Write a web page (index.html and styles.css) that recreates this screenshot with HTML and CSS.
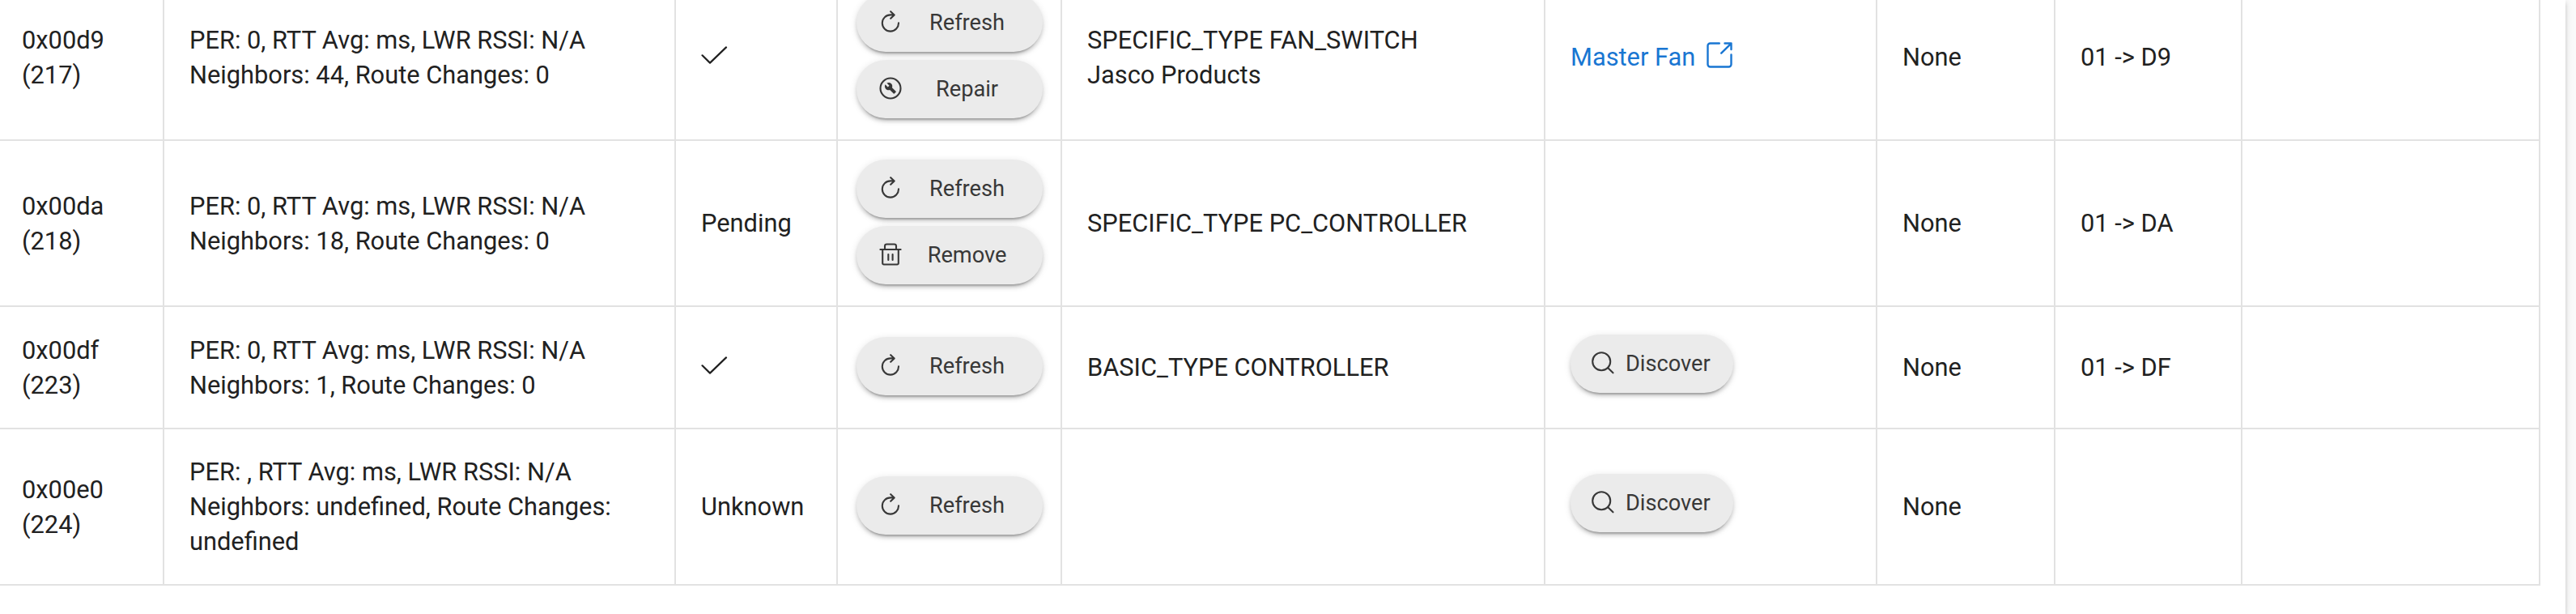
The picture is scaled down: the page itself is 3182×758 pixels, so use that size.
FILE: index.html
```html
<!DOCTYPE html>
<html>

<head>
	<meta charset="UTF-8">
	<title>Z-Wave Details</title>
	<link rel="stylesheet" href="styles.css">
</head>

<body>
	<!-- icons -->
	<svg class="defs" width="0" height="0">
		<symbol id="check" viewBox="0 0 36 36">
			<path d="M1.500 18.300l9.500 9.300L31 8.400" fill="none" stroke="currentColor" stroke-width="2.200" stroke-linecap="round" stroke-linejoin="round" />
		</symbol>
		<symbol id="refresh" viewBox="0 0 28 28">
			<path d="M24 15.300a10.100 10.100 0 1 1-10.100-9.900h4.700M14.200 1.200l4.500 4.200-4.500 4.400" fill="none" stroke="currentColor" stroke-width="2.100" stroke-linecap="round" stroke-linejoin="round" />
		</symbol>
		<symbol id="repair" viewBox="0 0 28 28">
			<circle cx="14" cy="14" r="12.500" fill="none" stroke="currentColor" stroke-width="2.100" />
			<path transform="translate(-2.200 -2.200) scale(1.350)" d="M16.900 15.490l-1.400 1.400c-.2.2-.51.2-.71 0l-3.410-3.410c-1.220.43-2.640.17-3.620-.81-1.110-1.110-1.300-2.790-.59-4.100l2.350 2.350 1.410-1.410-2.350-2.340c1.320-.71 2.990-.52 4.100.59.98.98 1.240 2.400.81 3.620l3.410 3.410c.19.19.19.51 0 .7z" fill="currentColor" />
		</symbol>
		<symbol id="trash" viewBox="0 0 28 28">
			<path d="M1.400 8h25.200M4.200 8v17a1.500 1.500 0 0 0 1.500 1.500h16.600a1.500 1.500 0 0 0 1.500-1.500V8M7 8V3.800a2.300 2.300 0 0 1 2.300-2.300h9.400a2.300 2.300 0 0 1 2.300 2.300v4.200M11.300 14v7M16.600 14v7" fill="none" stroke="currentColor" stroke-width="2.100" stroke-linecap="round" />
		</symbol>
		<symbol id="search" viewBox="0 0 28 28">
			<path d="M20 20l6.500 6.300" fill="none" stroke="currentColor" stroke-width="2.100" stroke-linecap="round" />
			<circle cx="12.200" cy="12.200" r="11" fill="none" stroke="currentColor" stroke-width="2.100" />
		</symbol>
		<symbol id="link" viewBox="0 0 32 32">
			<path d="M15.800 1.500H4.500a3 3 0 0 0-3 3v23a3 3 0 0 0 3 3h23a3 3 0 0 0 3-3V15.500M22.500 1.500h8v7.500M30.200 1.800L18.200 13.700" fill="none" stroke="currentColor" stroke-width="2.400" stroke-linecap="round" stroke-linejoin="round" />
		</symbol>
	</svg>

	<div class="card">
		<table class="nodes">
			<colgroup>
				<col class="c-id">
				<col class="c-metrics">
				<col class="c-status">
				<col class="c-actions">
				<col class="c-type">
				<col class="c-device">
				<col class="c-security">
				<col class="c-route">
				<col class="c-speed">
			</colgroup>
			<tr class="tall">
				<td>0x00d9<br>(217)</td>
				<td>PER: 0, RTT Avg: ms, LWR RSSI: N/A<br>Neighbors: 44, Route Changes: 0</td>
				<td><svg class="check"><use href="#check" /></svg></td>
				<td class="actions">
					<button class="btn"><svg><use href="#refresh" /></svg><span>Refresh</span></button>
					<button class="btn"><svg><use href="#repair" /></svg><span>Repair</span></button>
				</td>
				<td>SPECIFIC_TYPE FAN_SWITCH<br>Jasco Products</td>
				<td><a class="device">Master Fan<svg><use href="#link" /></svg></a></td>
				<td>None</td>
				<td>01 -&gt; D9</td>
				<td></td>
			</tr>
			<tr class="tall">
				<td>0x00da<br>(218)</td>
				<td>PER: 0, RTT Avg: ms, LWR RSSI: N/A<br>Neighbors: 18, Route Changes: 0</td>
				<td>Pending</td>
				<td class="actions">
					<button class="btn"><svg><use href="#refresh" /></svg><span>Refresh</span></button>
					<button class="btn"><svg><use href="#trash" /></svg><span>Remove</span></button>
				</td>
				<td>SPECIFIC_TYPE PC_CONTROLLER</td>
				<td></td>
				<td>None</td>
				<td>01 -&gt; DA</td>
				<td></td>
			</tr>
			<tr class="short">
				<td>0x00df<br>(223)</td>
				<td>PER: 0, RTT Avg: ms, LWR RSSI: N/A<br>Neighbors: 1, Route Changes: 0</td>
				<td><svg class="check"><use href="#check" /></svg></td>
				<td class="actions">
					<button class="btn"><svg><use href="#refresh" /></svg><span>Refresh</span></button>
				</td>
				<td>BASIC_TYPE CONTROLLER</td>
				<td><button class="btn discover"><svg><use href="#search" /></svg><span>Discover</span></button></td>
				<td>None</td>
				<td>01 -&gt; DF</td>
				<td></td>
			</tr>
			<tr class="last">
				<td>0x00e0<br>(224)</td>
				<td>PER: , RTT Avg: ms, LWR RSSI: N/A<br>Neighbors: undefined, Route Changes: undefined</td>
				<td>Unknown</td>
				<td class="actions">
					<button class="btn"><svg><use href="#refresh" /></svg><span>Refresh</span></button>
				</td>
				<td></td>
				<td><button class="btn discover"><svg><use href="#search" /></svg><span>Discover</span></button></td>
				<td>None</td>
				<td></td>
				<td></td>
			</tr>
		</table>
	</div>
</body>

</html>
```
FILE: styles.css
```css
* {
	box-sizing: border-box;
}

body {
	margin: 0;
	height: 758px;
	background: #fafafa;
	color: #212121;
	font-family: Roboto, sans-serif;
	font-size: 30.8px;
	line-height: 43px;
	overflow: hidden;
}

.defs {
	display: block;
}

.card {
	width: 3169px;
	height: 758px;
	overflow: hidden;
	background: #fff;
	box-shadow: 0 4px 4px 0 rgba(0, 0, 0, .14), 0 6px 2px -4px rgba(0, 0, 0, .2), 0 2px 10px 0 rgba(0, 0, 0, .12);
}

/* first row is scrolled partly out of view */
.nodes {
	width: 3138px;
	margin-top: -31px;
	table-layout: fixed;
	border-collapse: separate;
	border-spacing: 0;
}

.c-id { width: 203px; }
.c-metrics { width: 632px; }
.c-status { width: 200px; }
.c-actions { width: 277px; }
.c-type { width: 597px; }
.c-device { width: 410px; }
.c-security { width: 220px; }
.c-route { width: 231px; }
.c-speed { width: 368px; }

.nodes td {
	padding: 0 31px;
	border-right: 2px solid #e2e2e2;
	border-bottom: 2px solid #e2e2e2;
	vertical-align: middle;
}

.nodes td:first-child {
	padding-left: 27px;
}

.tall { height: 205px; }
.short { height: 151px; }
.last { height: 193px; }

.nodes .actions {
	padding: 0 22px 3px 22.5px;
}

.check {
	display: block;
	width: 36px;
	height: 36px;
	margin-bottom: 6px;
}

.btn {
	display: flex;
	align-items: center;
	width: 230px;
	height: 72px;
	padding: 0 28px;
	border: 0;
	border-radius: 36px;
	background: #ebebeb;
	color: #383838;
	font: 27.2px/72px Roboto, sans-serif;
	box-shadow: 0 4px 4px 0 rgba(0, 0, 0, .14), 0 6px 2px -4px rgba(0, 0, 0, .2), 0 2px 10px 0 rgba(0, 0, 0, .12);
}

.btn + .btn {
	margin-top: 10px;
}

.btn svg {
	width: 28px;
	height: 28px;
	margin-bottom: 2px;
	flex: none;
}

.btn span {
	flex: 1;
	padding-left: 16px;
	text-align: center;
}

.discover {
	width: 201px;
	margin-bottom: 10px;
	padding: 0 26px;
}

.discover span {
	padding-left: 14px;
	text-align: left;
}

.device {
	display: flex;
	color: #1976d2;
}

.device svg {
	width: 32px;
	height: 32px;
	margin: 2.5px 0 0 14px;
}
```
